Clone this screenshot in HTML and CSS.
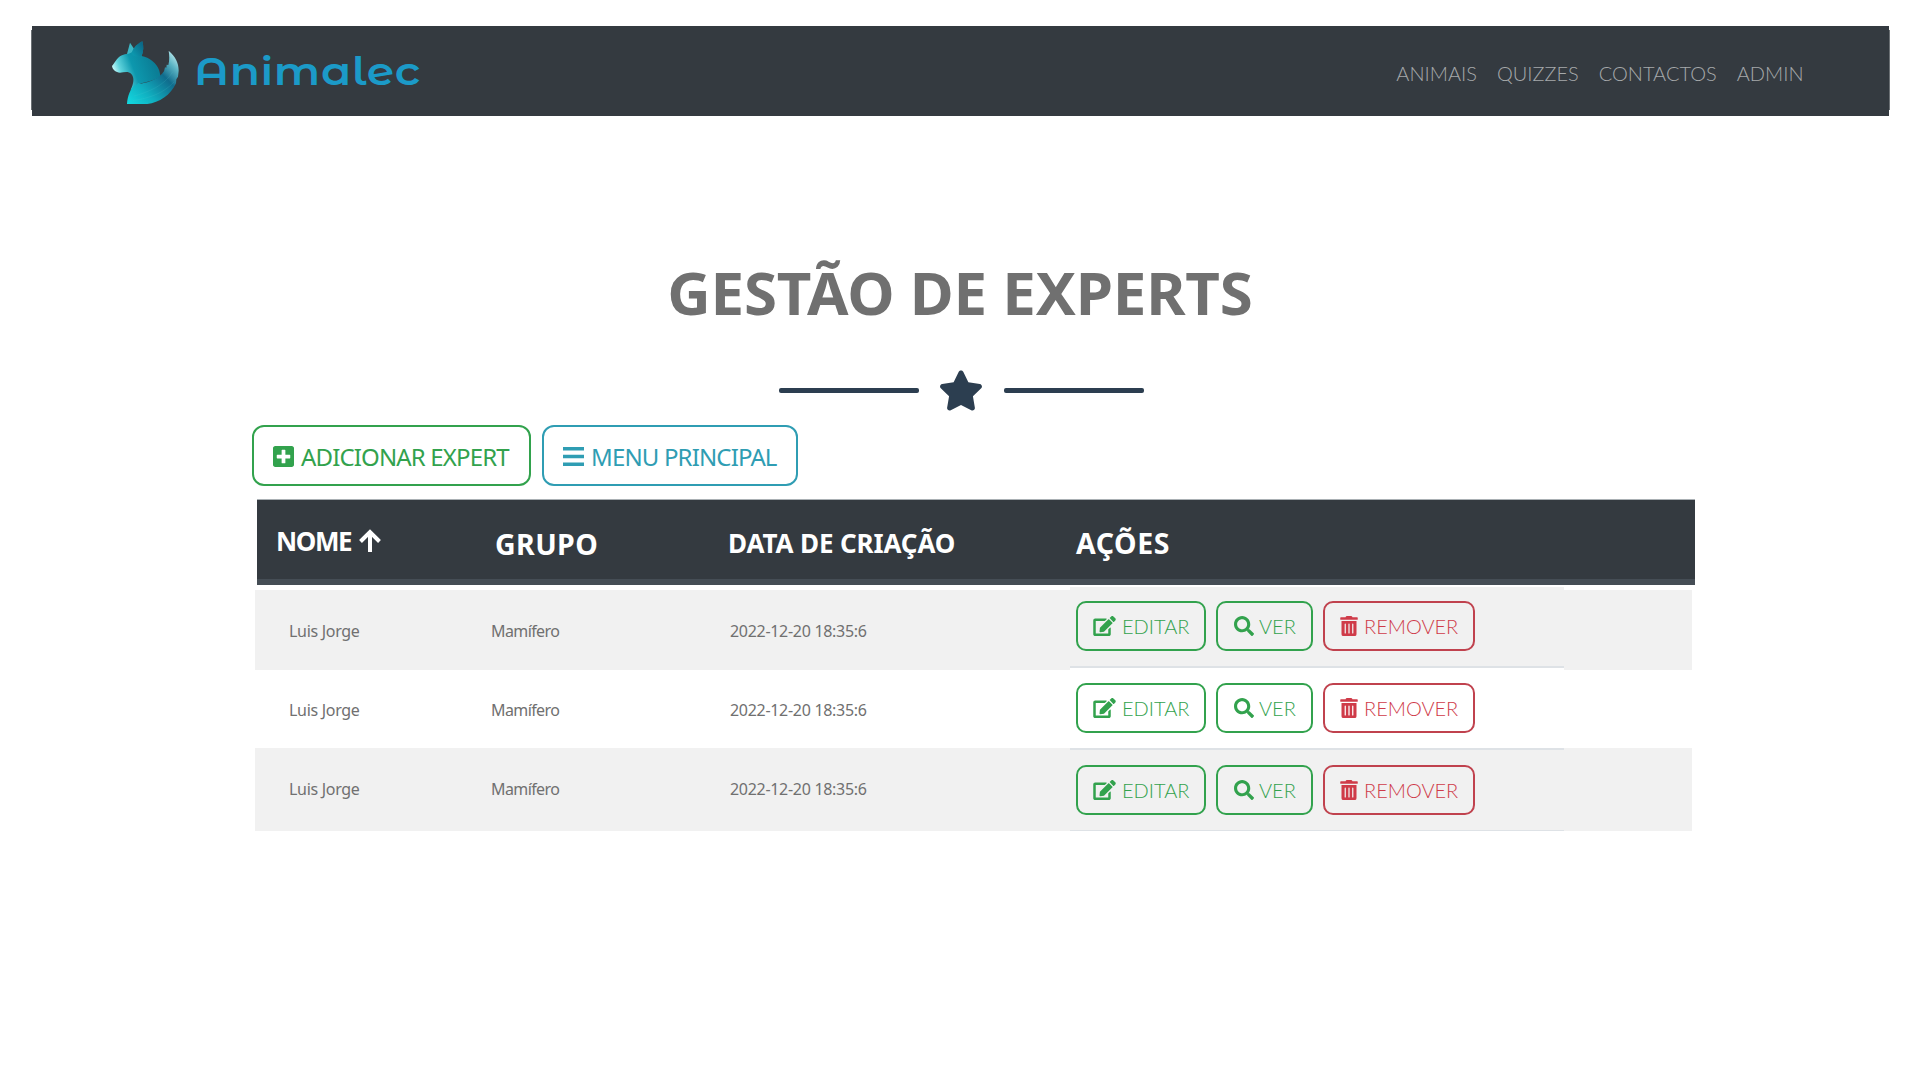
FILE: index.html
```html
<!DOCTYPE html>
<html lang="pt">
<head>
<meta charset="utf-8">
<title>Animalec</title>
<link rel="stylesheet" href="styles.css">
</head>
<body>
<svg class="sprite" aria-hidden="true">
  <symbol id="i-edit" viewBox="0 0 576 512"><path d="M402.600 83.200l90.200 90.200c3.800 3.800 3.800 10 0 13.800L274.400 405.600l-92.800 10.300c-12.400 1.400-22.900-9.100-21.500-21.500l10.300-92.800L388.800 83.200c3.800-3.800 10-3.800 13.800 0zm162-22.900l-48.800-48.800c-15.200-15.200-39.900-15.200-55.200 0l-35.400 35.400c-3.800 3.800-3.800 10 0 13.800l90.200 90.200c3.800 3.800 10 3.800 13.800 0l35.400-35.400c15.200-15.300 15.200-40 0-55.200zM384 346.200V448H64V128h229.800c3.200 0 6.200-1.300 8.500-3.500l40-40c7.600-7.600 2.200-20.500-8.500-20.500H48C21.500 64 0 85.500 0 112v352c0 26.500 21.500 48 48 48h352c26.500 0 48-21.500 48-48V306.200c0-10.700-12.900-16-20.500-8.500l-40 40c-2.200 2.300-3.500 5.300-3.500 8.500z"/></symbol>
  <symbol id="i-search" viewBox="0 0 512 512"><path d="M505 442.700L405.300 343c-4.500-4.500-10.600-7-17-7H372c27.600-35.300 44-79.700 44-128C416 93.100 322.900 0 208 0S0 93.100 0 208s93.100 208 208 208c48.300 0 92.700-16.400 128-44v16.300c0 6.400 2.500 12.500 7 17l99.700 99.700c9.400 9.400 24.600 9.400 33.900 0l28.300-28.300c9.400-9.400 9.400-24.600.1-34zM208 336c-70.700 0-128-57.200-128-128 0-70.700 57.200-128 128-128 70.700 0 128 57.200 128 128 0 70.700-57.200 128-128 128z"/></symbol>
  <symbol id="i-trash" viewBox="0 0 448 512"><path d="M32 464a48 48 0 0 0 48 48h288a48 48 0 0 0 48-48V128H32zm272-256a16 16 0 0 1 32 0v224a16 16 0 0 1-32 0zm-96 0a16 16 0 0 1 32 0v224a16 16 0 0 1-32 0zm-96 0a16 16 0 0 1 32 0v224a16 16 0 0 1-32 0zM432 32H312l-9.400-18.700A24 24 0 0 0 281.100 0H166.800a23.700 23.700 0 0 0-21.400 13.300L136 32H16A16 16 0 0 0 0 48v32a16 16 0 0 0 16 16h416a16 16 0 0 0 16-16V48a16 16 0 0 0-16-16z"/></symbol>
</svg>
<header class="navbar">
  <a class="brand">
    <svg class="fox" viewBox="0 0 270 240" aria-hidden="true">
      <defs>
        <linearGradient id="head" x1="0" y1=".6" x2=".8" y2=".3"><stop offset="0" stop-color="#d8ffff"/><stop offset=".2" stop-color="#5fd3dc"/><stop offset=".5" stop-color="#0d98ae"/><stop offset="1" stop-color="#0b7e96"/></linearGradient>
        <linearGradient id="ear" x1="0" y1="1" x2="1" y2="0"><stop offset="0" stop-color="#0c9fb4"/><stop offset="1" stop-color="#0b5f80"/></linearGradient>
        <linearGradient id="tail" x1="0" y1="1" x2="1" y2="0"><stop offset="0" stop-color="#12dbe2"/><stop offset=".3" stop-color="#10aebf"/><stop offset=".62" stop-color="#106c8d"/><stop offset=".8" stop-color="#5cb4c4"/><stop offset="1" stop-color="#e4ffff"/></linearGradient>
      </defs>
      <path fill="#3db6c4" d="M80 76 90 38 102 56 98 74z"/>
      <path fill="url(#head)" d="M36 108C48 94 52 82 66 76 78 70 88 74 96 66 104 50 114 42 127 34 131 48 131 64 125 78 148 83 170 98 178 122L182 141C160 152 140 156 124 160L92 180C101 160 104 144 94 132 84 122 72 128 60 128 48 127 38 120 36 108z"/>
      <path fill="url(#ear)" d="M96 72C98 52 112 42 127 34 131 48 131 64 125 78 114 82 102 80 96 72z"/>
      <path fill="url(#tail)" d="M206 62C226 80 236 98 236 122L234 140 229 148 228 160C212 196 178 218 142 222H81C83 198 90 178 106 162L106 168 116 158 120 162C150 156 178 146 192 124L195 112 199 113 200 104 205 105C209 90 208 76 206 62z"/>
      <path fill="none" stroke="#55c6d3" stroke-opacity=".15" stroke-width="3" d="M102 198C145 186 192 168 218 126M98 212C150 204 190 190 222 156"/>
    </svg>
    <span class="brand-name">Animalec</span>
  </a>
  <nav class="menu"><a>ANIMAIS</a><a>QUIZZES</a><a>CONTACTOS</a><a>ADMIN</a></nav>
</header>
<main>
  <h1>GESTÃO DE EXPERTS</h1>
  <div class="divider">
    <i></i>
    <svg viewBox="20 0 536 512" aria-hidden="true"><path d="M259.300 17.800L194 150.200 47.900 171.500c-26.200 3.800-36.700 36.100-17.700 54.600l105.700 103-25 145.500c-4.500 26.300 23.200 46 46.400 33.700L288 439.600l130.700 68.700c23.200 12.200 50.900-7.400 46.400-33.700l-25-145.500 105.700-103c19-18.500 8.500-50.800-17.700-54.600L382 150.200 316.700 17.800c-11.700-23.600-45.600-23.900-57.400 0z"/></svg>
    <i></i>
  </div>
  <div class="toolbar">
    <a class="btn add"><svg viewBox="0 32 448 448" aria-hidden="true"><path d="M400 32H48C21.500 32 0 53.500 0 80v352c0 26.500 21.500 48 48 48h352c26.500 0 48-21.500 48-48V80c0-26.500-21.500-48-48-48zm-32 252c0 6.600-5.400 12-12 12h-92v92c0 6.600-5.400 12-12 12h-56c-6.600 0-12-5.400-12-12v-92H92c-6.600 0-12-5.400-12-12v-56c0-6.600 5.400-12 12-12h92v-92c0-6.600 5.400-12 12-12h56c6.600 0 12 5.400 12 12v92h92c6.600 0 12 5.400 12 12z"/></svg><span>ADICIONAR EXPERT</span></a>
    <a class="btn main-menu"><svg viewBox="0 0 21 19" aria-hidden="true"><path d="M0 0h21v3.400H0zM0 7.800h21v3.400H0zM0 15.600h21V19H0z"/></svg><span>MENU PRINCIPAL</span></a>
  </div>
  <section class="table">
    <div class="thead">
      <div class="h-name"><span>NOME</span><svg viewBox="0 0 22 23" aria-hidden="true"><path d="M11 23V3M1.500 12.500l9.500-9.500 9.500 9.500"/></svg></div>
      <div class="h-group"><span>GRUPO</span></div>
      <div class="h-date"><span>DATA DE CRIAÇÃO</span></div>
      <div class="h-actions"><span>AÇÕES</span></div>
    </div>
    <div class="row r1">
      <span class="name">Luis Jorge</span><span class="group">Mamífero</span><span class="date">2022-12-20 18:35:6</span>
      <div class="actions"><a class="act edit"><svg><use href="#i-edit"/></svg><span>EDITAR</span></a><a class="act view"><svg><use href="#i-search"/></svg><span>VER</span></a><a class="act del"><svg><use href="#i-trash"/></svg><span>REMOVER</span></a></div>
    </div>
    <div class="row r2">
      <span class="name">Luis Jorge</span><span class="group">Mamífero</span><span class="date">2022-12-20 18:35:6</span>
      <div class="actions"><a class="act edit"><svg><use href="#i-edit"/></svg><span>EDITAR</span></a><a class="act view"><svg><use href="#i-search"/></svg><span>VER</span></a><a class="act del"><svg><use href="#i-trash"/></svg><span>REMOVER</span></a></div>
    </div>
    <div class="row r3">
      <span class="name">Luis Jorge</span><span class="group">Mamífero</span><span class="date">2022-12-20 18:35:6</span>
      <div class="actions"><a class="act edit"><svg><use href="#i-edit"/></svg><span>EDITAR</span></a><a class="act view"><svg><use href="#i-search"/></svg><span>VER</span></a><a class="act del"><svg><use href="#i-trash"/></svg><span>REMOVER</span></a></div>
    </div>
  </section>
</main>
</body>
</html>
```
FILE: styles.css
```css
* { box-sizing: border-box; }
body { margin: 0; background: #fff; color: #707070; font-family: "Noto Sans", "Open Sans", sans-serif; }
span, a { white-space: nowrap; }
svg { display: block; fill: currentColor; flex: none; }
.sprite { display: none; }

.navbar { position: relative; display: flex; height: 90px; margin: 26px 31px 0 32px; padding: 4px 85.500px 0 68px; background: #343a40; }
.navbar::before { content: ""; position: absolute; inset: 4px -1px 6px; border: solid #6b7074; border-width: 0 1px; }
.brand { display: flex; flex: 1; }
.fox { width: 90px; height: 80px; }
.brand-name { margin: 11px 0 0 4px; color: #1b9ac8; font: 600 39px/60px "Montserrat Alternates", Inter, sans-serif; letter-spacing: .5px; transform: scaleX(1.13); transform-origin: left; }
.menu { display: flex; gap: 20px; padding-top: 31px; color: #a6a9ab; font: 300 20px/24px Lato, sans-serif; }

h1 { height: 80px; margin: 136px 0 0; text-align: center; font-size: 60px; line-height: 80px; letter-spacing: -.2px; }
.divider { display: flex; justify-content: center; align-items: center; gap: 21px; height: 41px; margin: 38px 0 0 3px; color: #2c3e50; }
.divider i { width: 140px; height: 5px; border-radius: 2px; background: currentColor; }
.divider svg { width: 42px; height: 41px; margin-right: 1px; }

.toolbar { display: flex; gap: 11px; margin: 14px 0 0 252px; }
.btn { display: flex; align-items: center; height: 61px; padding-top: 2px; border: 2.500px solid; border-radius: 12px; font-size: 24px; letter-spacing: -.85px; }
.add { width: 279px; padding-left: 19px; color: #32a24d; }
.add svg { width: 21px; height: 21px; margin-right: 7px; }
.main-menu { width: 256px; padding-left: 19px; color: #2f9db3; }
.main-menu svg { width: 21px; height: 19px; margin-right: 7px; }

.table { width: 1440px; margin: 13px 0 0 255px; }
.thead { display: grid; grid-template-columns: 219px 233px 348px 1fr; width: 1438px; height: 86px; margin: 0 0 5px 2px; padding-left: 19px; background: #343a40; border-top: 1px solid #aab0b4; border-bottom: 6px solid #454d55; color: #fff; font-weight: 700; line-height: 34px; font-size: 26px; }
.thead > div { display: flex; padding-top: 26px; }
.thead .h-name { padding-top: 24px; letter-spacing: -1.400px; }
.thead .h-group { padding-top: 27px; font-size: 28.500px; letter-spacing: .4px; }
.thead .h-date { letter-spacing: -.12px; }
.thead .h-actions { padding-top: 26px; font-size: 28.500px; letter-spacing: .6px; }
.thead svg { width: 22px; height: 23px; margin: 5px 0 0 8px; fill: none; stroke: currentColor; stroke-width: 4; }
.row { display: grid; grid-template-columns: 236px 239px 340px 494px; width: 1437px; background: #f1f1f1; font-size: 16px; line-height: 22px; letter-spacing: -.3px; }
.row > span { padding-top: 30px; }
.name { padding-left: 34px; }
.group { letter-spacing: -.6px; }
.r1 { height: 80px; }
.r2 { height: 78px; background: #fff; }
.r2 > span { padding-top: 29px; }
.r3 { height: 83px; }
.actions { position: relative; display: flex; gap: 10px; padding: 15px 0 0 6px; background: inherit; border-bottom: 2px solid #dee2e6; }
.r1 .actions { margin: -3px 0 2px; padding-top: 14px; }
.r2 .actions { margin: -2px 0; }
.r3 .actions { margin-top: 2px; border-width: 1px; }
.act { display: flex; height: 50px; align-items: center; border: 2px solid #32a24d; border-radius: 10px; color: #32a24d; font: 300 20px/24px Lato, sans-serif; letter-spacing: 0; }
.act svg { height: 20px; }
.edit { width: 130px; padding-left: 15px; }
.edit svg { width: 23px; margin-right: 6px; }
.view { width: 97px; padding-left: 16px; }
.view svg { width: 20px; margin-right: 5px; }
.del { width: 152px; padding-left: 15px; color: #cf3b49; border-color: #c0424e; }
.del svg { width: 18px; margin-right: 6px; }
```
